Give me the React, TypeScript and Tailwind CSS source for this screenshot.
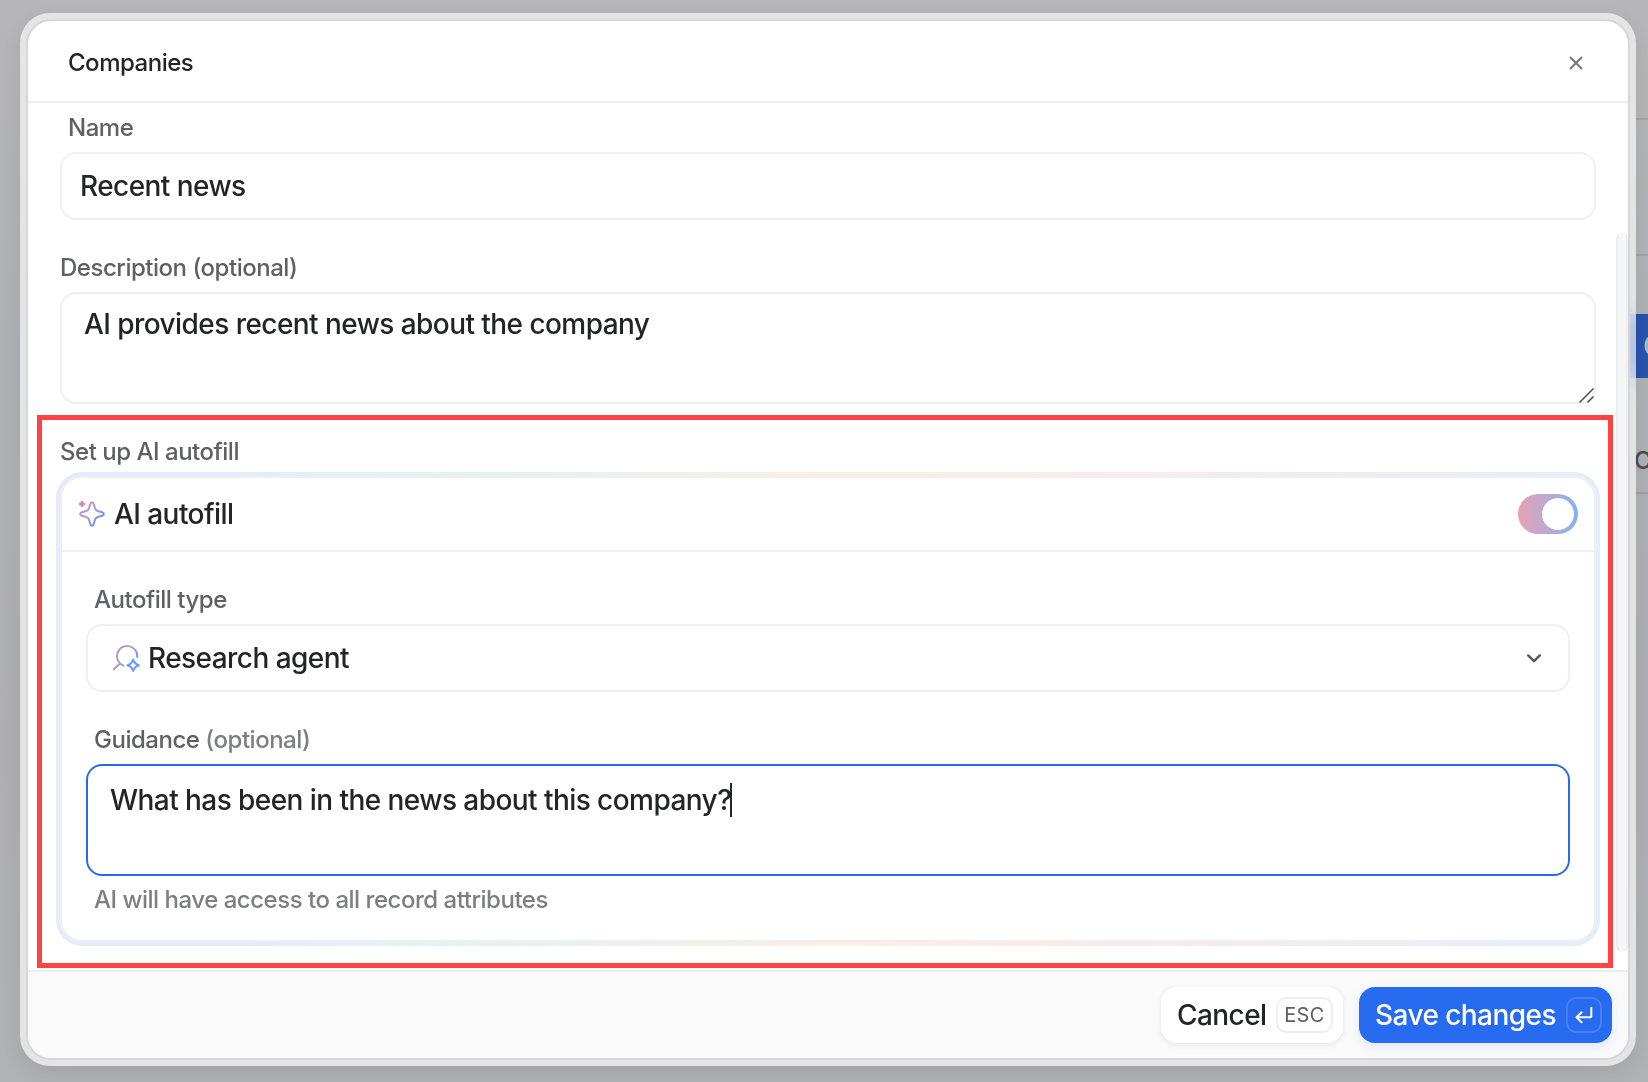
import type { ReactNode } from 'react';

/** Pieces of the page that stay visible to the right of the dialog. */
function Backdrop() {
  return (
    <div className="absolute inset-0 overflow-hidden bg-[linear-gradient(180deg,#b6b6b8_0%,#b0b1b4_30%,#afafb3_70%,#b1b2b4_100%)]">
      <div className="absolute top-[118px] right-0 h-0.5 w-12 bg-[#a4a4a7]" />
      <div className="absolute top-[254px] right-0 h-0.5 w-12 bg-[#a2a2a4]" />
      <div className="absolute top-[314px] right-0 h-16 w-[30px] bg-[#2952ac]" />
      <span className="absolute top-[326px] left-[1643px] text-[28px] leading-10 font-medium text-[#b5b8c0]">
        C
      </span>
      <span className="absolute top-[445px] left-[1634px] text-[24px] leading-8 font-medium text-[#4b4b4f]">
        C
      </span>
      <div className="absolute top-[492px] right-0 h-0.5 w-12 bg-[#a0a0a3]" />
    </div>
  );
}

function SparkleIcon() {
  return (
    <svg width="28" height="28" viewBox="0 0 28 28" fill="none" className="shrink-0">
      <defs>
        <linearGradient id="sparkle" x1="2" y1="4" x2="22" y2="24" gradientUnits="userSpaceOnUse">
          <stop stopColor="#dd8ba8" />
          <stop offset="0.5" stopColor="#a89dd8" />
          <stop offset="1" stopColor="#4f93f7" />
        </linearGradient>
      </defs>
      <path
        d="M14 2.200C15 2.200 15.400 3 15.700 4L17 8.300C17.450 9.800 18.200 10.550 19.700 11L24 12.300C26.400 13 26.400 15 24 15.700L19.700 17C18.200 17.450 17.450 18.200 17 19.700L15.700 24C15 26.400 13 26.400 12.300 24L11 19.700C10.550 18.200 9.800 17.450 8.300 17L4 15.700C1.600 15 1.600 13 4 12.300L8.300 11C9.800 10.550 10.550 9.800 11 8.300L12.300 4C12.600 3 13 2.200 14 2.200Z"
        stroke="url(#sparkle)"
        strokeWidth="2"
        strokeLinejoin="round"
      />
      <path d="M4 1v6M1 4h6" stroke="#cf8db3" strokeWidth="2.600" />
    </svg>
  );
}

function ResearchIcon() {
  return (
    <svg width="28" height="28" viewBox="0 0 28 28" fill="none" className="shrink-0 overflow-visible">
      <defs>
        <linearGradient id="research" x1="4" y1="2" x2="24" y2="22" gradientUnits="userSpaceOnUse">
          <stop stopColor="#c493b0" />
          <stop offset="0.45" stopColor="#a79ed6" />
          <stop offset="1" stopColor="#5b93fa" />
        </linearGradient>
      </defs>
      <path
        d="M11.300 21.600A10.200 10.200 0 1 1 25.300 13M8 19.400L1.800 25.200"
        stroke="url(#research)"
        strokeWidth="2"
        strokeLinecap="round"
      />
      <path
        d="M21.200 15.600C22.300 19 23.400 20.200 26.900 21.300C23.400 22.400 22.300 23.600 21.200 27C20.100 23.600 19 22.400 15.500 21.300C19 20.200 20.100 19 21.200 15.600Z"
        stroke="#6a9afb"
        strokeWidth="2"
        strokeLinejoin="round"
      />
    </svg>
  );
}

function Label({ children, className = '' }: { children: ReactNode; className?: string }) {
  return (
    <div className={`text-[24px] leading-8 font-medium tracking-[-0.02em] text-[#5f6062] ${className}`}>
      {children}
    </div>
  );
}

export default function App() {
  return (
    <div className="relative h-[1082px] w-[1648px] overflow-hidden pt-[13px] pr-3 pb-4 pl-5 font-[Inter,sans-serif] text-[#232425]">
      <Backdrop />

      {/* Dialog frame */}
      <div className="relative h-[1053px] rounded-[30px] bg-white/65 p-1.5 shadow-[0_8px_20px_rgba(0,0,0,0.08)] backdrop-blur-md">
        <div className="flex h-full flex-col overflow-hidden rounded-[25px] border-2 border-[#d6d6d8] bg-white">
          <header className="flex h-[82px] shrink-0 items-center justify-between border-b-2 border-[#eeeff0] pt-1 pr-[45px] pl-10">
            <h1 className="text-[24px] leading-8 font-medium tracking-[-0.02em]">Companies</h1>
            <button type="button" aria-label="Close">
              <svg width="14" height="14" viewBox="0 0 14 14" stroke="#75777b" strokeWidth="2" strokeLinecap="round">
                <path d="M1.500 1.500l11 11M12.500 1.500l-11 11" />
              </svg>
            </button>
          </header>

          <div className="flex min-h-0 flex-1">
            <div className="w-[1568px] pt-[9px] pl-8">
              <Label className="pl-2">Name</Label>
              <div className="mt-2 flex h-[68px] items-center rounded-2xl border-2 border-[#eeeff0] px-[18px] text-[28px] leading-10 font-medium tracking-[-0.02em]">
                Recent news
              </div>

              <Label className="mt-8">Description (optional)</Label>
              <div className="relative mt-2 h-28 rounded-2xl border-2 border-[#eeeff0] px-[22px] pt-2.5 text-[28px] leading-10 font-medium tracking-[-0.02em]">
                AI provides recent news about the company
                <svg
                  className="absolute right-0 -bottom-px"
                  width="15"
                  height="15"
                  viewBox="0 0 15 15"
                  stroke="#4c4c4c"
                  strokeWidth="1.500"
                >
                  <path d="M.5 14.500L14.500.5M8.500 14.500l6-6" />
                </svg>
              </div>

              <Label className="mt-8">Set up AI autofill</Label>
              <div className="-mx-1 mt-1 h-[474px] rounded-[26px] bg-[linear-gradient(90deg,#e3ebfc_0%,#e3ebfc_10%,#e0f4f3_25%,#eef0ea_38%,#fdefe0_50%,#fdebe5_62%,#f6ebed_74%,#ecedf6_88%,#e3edfc_97%)] p-1">
                <div className="h-full rounded-[22px] border-2 border-[#eeeff0] bg-white">
                  <div className="flex h-[74px] items-center justify-between border-b-2 border-[#eeeff0] px-4">
                    <div className="flex items-center gap-2 text-[28px] leading-10 font-medium tracking-[-0.02em]">
                      <SparkleIcon />
                      AI autofill
                    </div>
                    <div className="flex h-10 w-[60px] justify-end rounded-full bg-linear-to-r from-[#e6a1b4] to-[#82b0f2] p-1">
                      <div className="size-8 rounded-full bg-white" />
                    </div>
                  </div>

                  <div className="px-6 pt-8">
                    <Label className="pl-2">Autofill type</Label>
                    <div className="mt-2 flex h-[68px] items-center rounded-2xl border-2 border-[#eeeff0] pr-[27px] pl-6 text-[28px] leading-10 font-medium tracking-[-0.02em]">
                      <ResearchIcon />
                      <span className="ml-2 flex-1">Research agent</span>
                      <svg
                        width="14"
                        height="9"
                        viewBox="0 0 14 9"
                        fill="none"
                        stroke="#55575a"
                        strokeWidth="2.400"
                        strokeLinecap="round"
                        strokeLinejoin="round"
                      >
                        <path d="M1.200 1.400L7 7.200l5.800-5.800" />
                      </svg>
                    </div>

                    <Label className="mt-8 pl-2">
                      Guidance <span className="text-[#7c7e81]">(optional)</span>
                    </Label>
                    <div className="mt-2 flex h-28 items-start rounded-2xl border-2 border-[#2b69ec] px-[22px] pt-3.5 text-[28px] leading-10 font-medium tracking-[-0.02em]">
                      What has been in the news about this company?
                      <span className="mt-[3px] -ml-px h-[34px] w-0.5 bg-[#232425]" />
                    </div>
                    <div className="mt-2 pl-2 text-[24px] leading-8 font-medium tracking-[-0.02em] text-[#7c7e81]">
                      AI will have access to all record attributes
                    </div>
                  </div>
                </div>
              </div>
            </div>

            {/* Scrollbar */}
            <div className="mt-[130px] ml-auto h-[719px] w-3 rounded-full border-x-2 border-[#eeeeef] bg-[#f5f6f7]" />
          </div>

          <footer className="flex h-[88px] shrink-0 items-start justify-end gap-4 border-t-2 border-[#ededee] bg-[#fafafb] pt-[15px] pr-4">
            <button
              type="button"
              className="flex h-14 w-[182px] items-center justify-between rounded-2xl bg-white pr-2.5 pl-4 text-[28px] leading-10 font-medium tracking-[-0.02em] shadow-[0_2px_6px_rgba(0,0,0,0.08)]"
            >
              Cancel
              <kbd className="flex h-9 w-[57px] items-center justify-center rounded-[10px] border-2 border-[#eeeff0] font-[Inter,sans-serif] text-[20px] leading-none font-normal tracking-[0.02em] text-[#5f6062]">
                ESC
              </kbd>
            </button>
            <button
              type="button"
              className="flex h-14 w-[253px] items-center justify-between rounded-2xl bg-[#276bf0] pr-2.5 pl-4 text-[28px] leading-10 font-medium tracking-[-0.02em] text-white shadow-[0_4px_12px_rgba(38,109,240,0.12)]"
            >
              Save changes
              <kbd className="flex size-9 items-center justify-center rounded-[10px] border-2 border-[#4780f2]">
                <svg
                  width="18"
                  height="18"
                  viewBox="0 0 18 18"
                  fill="none"
                  stroke="currentColor"
                  strokeWidth="2"
                  strokeLinecap="round"
                  strokeLinejoin="round"
                >
                  <path d="M16.300 1.800V10.300a1 1 0 0 1-1 1H1.800M6.600 6.200L1.500 11.300l5.100 5.100" />
                </svg>
              </kbd>
            </button>
          </footer>
        </div>
      </div>

      {/* Highlight around the autofill section */}
      <div className="pointer-events-none absolute top-[415px] left-[37px] h-[553px] w-[1576px] border-5 border-[#ff4242]" />
    </div>
  );
}
